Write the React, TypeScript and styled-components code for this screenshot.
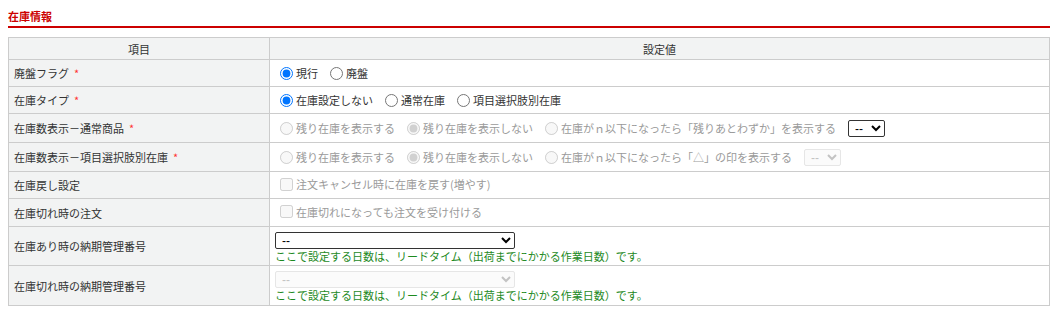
import styled, { createGlobalStyle } from "styled-components";

const GlobalStyle = createGlobalStyle`
  body {
    margin: 8px;
    background: #fff;
    font-family: "Noto Sans CJK JP", "Noto Sans", sans-serif;
    font-size: 11px;
    color: #333;
  }
`;

const Title = styled.h2`
  margin: 0;
  font-size: 11px;
  line-height: 16px;
  font-weight: bold;
  color: #cc0000;
  padding-bottom: 2px;
  border-bottom: 2px solid #cc0000;
`;

const Table = styled.table`
  width: 100%;
  margin-top: 9px;
  border-collapse: collapse;
  font-size: 11px;
  line-height: 16px;
`;

const HeadCell = styled.th`
  background: #f2f3f3;
  border: 1px solid #cccccc;
  font-weight: normal;
  height: 21px;
  padding: 0 5px;
  text-align: center;
  color: #333;
`;

const Label = styled.td`
  width: 250px;
  background: #f2f3f3;
  border: 1px solid #cccccc;
  padding: 0 5px;
  vertical-align: middle;
  color: #333;
`;

const Value = styled.td<{ $h: number }>`
  border: 1px solid #cccccc;
  height: ${(p) => p.$h}px;
  padding: 0 5px 0 10px;
  vertical-align: middle;
`;

const Required = styled.span`
  color: #ff3333;
  margin-left: 5px;
`;

const Options = styled.div`
  display: flex;
  align-items: center;
  gap: 12px;
`;

const Choice = styled.label<{ $off?: boolean }>`
  display: inline-flex;
  align-items: center;
  color: ${(p) => (p.$off ? "#9a9a9a" : "#333")};

  input {
    margin: 0 3px 0 0;
  }
`;

const Select = styled.select<{ $w: number }>`
  width: ${(p) => p.$w}px;
  height: 17px;
  font-family: "Liberation Sans", sans-serif;
  font-size: 12px;
  padding: 0 2px;
  border: 1px solid ${(p) => (p.disabled ? "#dcdcdc" : "#333")};
  border-radius: 2px;
  background: ${(p) => (p.disabled ? "#fafafa" : "#fff")};
  color: ${(p) => (p.disabled ? "#aaa" : "#000")};
`;

const Stack = styled.div`
  display: flex;
  flex-direction: column;
  align-items: flex-start;
  margin-left: -5px;
  padding-top: 3px;
`;

const Note = styled.div`
  color: #1e8a1e;
  line-height: 15px;
`;

const Radio = ({ label, name, checked, off }: { label: string; name: string; checked?: boolean; off?: boolean }) => (
  <Choice $off={off}>
    <input type="radio" name={name} defaultChecked={checked} disabled={off} />
    {label}
  </Choice>
);

const Check = ({ label }: { label: string }) => (
  <Choice $off>
    <input type="checkbox" disabled />
    {label}
  </Choice>
);

export default function App() {
  return (
    <>
      <GlobalStyle />
      <Title>在庫情報</Title>
      <Table>
        <thead>
          <tr>
            <HeadCell>項目</HeadCell>
            <HeadCell>設定値</HeadCell>
          </tr>
        </thead>
        <tbody>
          <tr>
            <Label>
              廃盤フラグ<Required>*</Required>
            </Label>
            <Value $h={26}>
              <Options>
                <Radio name="haiban" label="現行" checked />
                <Radio name="haiban" label="廃盤" />
              </Options>
            </Value>
          </tr>
          <tr>
            <Label>
              在庫タイプ<Required>*</Required>
            </Label>
            <Value $h={26}>
              <Options>
                <Radio name="type" label="在庫設定しない" checked />
                <Radio name="type" label="通常在庫" />
                <Radio name="type" label="項目選択肢別在庫" />
              </Options>
            </Value>
          </tr>
          <tr>
            <Label>
              在庫数表示－通常商品<Required>*</Required>
            </Label>
            <Value $h={28}>
              <Options>
                <Radio name="disp1" label="残り在庫を表示する" off />
                <Radio name="disp1" label="残り在庫を表示しない" checked off />
                <Radio name="disp1" label="在庫がｎ以下になったら「残りあとわずか」を表示する" off />
                <Select $w={37}>
                  <option>--</option>
                </Select>
              </Options>
            </Value>
          </tr>
          <tr>
            <Label>
              在庫数表示－項目選択肢別在庫<Required>*</Required>
            </Label>
            <Value $h={28}>
              <Options>
                <Radio name="disp2" label="残り在庫を表示する" off />
                <Radio name="disp2" label="残り在庫を表示しない" checked off />
                <Radio name="disp2" label="在庫がｎ以下になったら「△」の印を表示する" off />
                <Select $w={37} disabled>
                  <option>--</option>
                </Select>
              </Options>
            </Value>
          </tr>
          <tr>
            <Label>在庫戻し設定</Label>
            <Value $h={26}>
              <Check label="注文キャンセル時に在庫を戻す(増やす)" />
            </Value>
          </tr>
          <tr>
            <Label>在庫切れ時の注文</Label>
            <Value $h={27}>
              <Check label="在庫切れになっても注文を受け付ける" />
            </Value>
          </tr>
          <tr>
            <Label>在庫あり時の納期管理番号</Label>
            <Value $h={38}>
              <Stack>
                <Select $w={240}>
                  <option>--</option>
                </Select>
                <Note>ここで設定する日数は、リードタイム（出荷までにかかる作業日数）です。</Note>
              </Stack>
            </Value>
          </tr>
          <tr>
            <Label>在庫切れ時の納期管理番号</Label>
            <Value $h={39}>
              <Stack>
                <Select $w={240} disabled>
                  <option>--</option>
                </Select>
                <Note>ここで設定する日数は、リードタイム（出荷までにかかる作業日数）です。</Note>
              </Stack>
            </Value>
          </tr>
        </tbody>
      </Table>
    </>
  );
}
